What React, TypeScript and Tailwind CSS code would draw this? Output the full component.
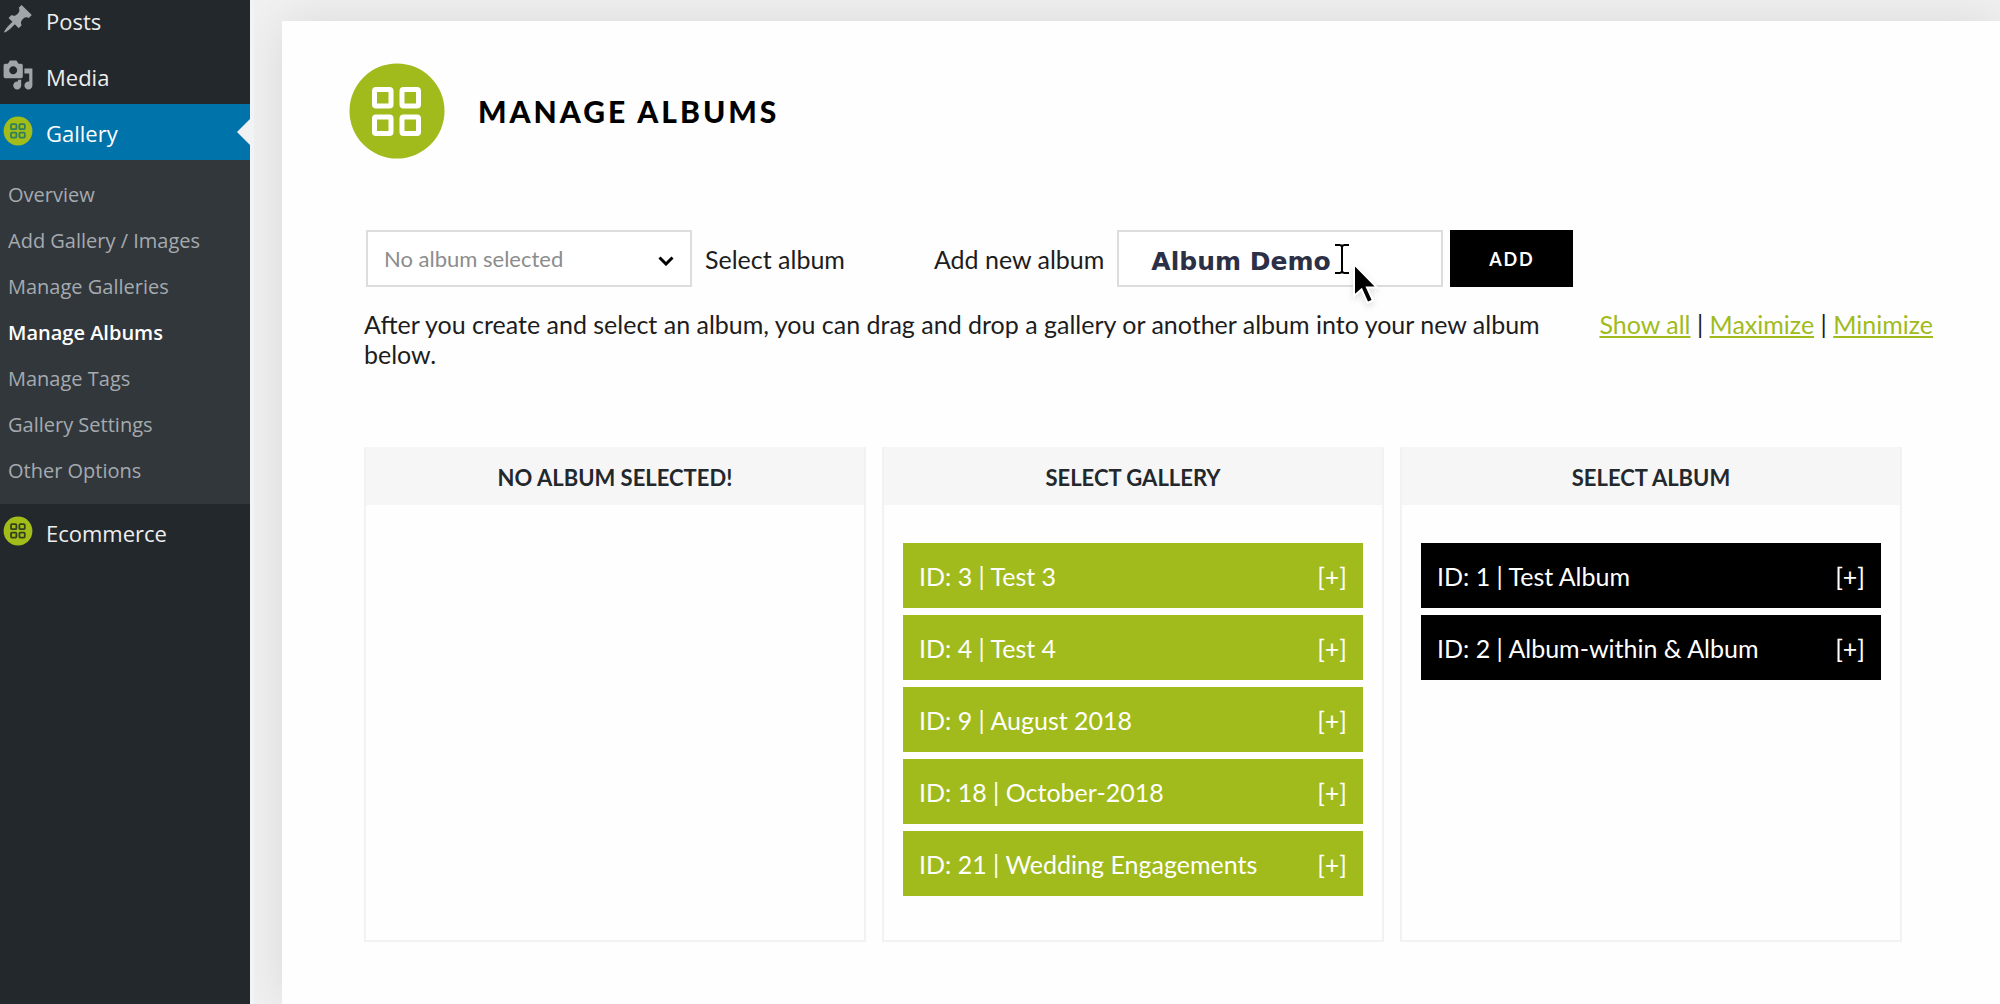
import React from "react";

const submenu = [
  "Overview",
  "Add Gallery / Images",
  "Manage Galleries",
  "Manage Albums",
  "Manage Tags",
  "Gallery Settings",
  "Other Options",
];

const galleries = [
  "ID: 3 | Test 3",
  "ID: 4 | Test 4",
  "ID: 9 | August 2018",
  "ID: 18 | October-2018",
  "ID: 21 | Wedding Engagements",
];

const albums = ["ID: 1 | Test Album", "ID: 2 | Album-within & Album"];

function PinIcon() {
  return (
    <svg viewBox="0 0 20 20" className="mb-1 size-8 shrink-0 fill-[#a0a5aa]" aria-hidden="true">
      <path d="M10.44 3.02l1.82-1.82 6.36 6.35-1.83 1.82c-1.05-.68-2.48-.57-3.41.36l-.75.75c-.92.93-1.04 2.35-.35 3.41l-1.83 1.82-2.41-2.41-2.8 2.79c-.42.42-3.38 2.71-3.8 2.29s1.86-3.39 2.28-3.81l2.79-2.79L4.1 9.36l1.83-1.82c1.05.69 2.48.57 3.4-.36l.75-.75c.93-.92 1.05-2.35.36-3.41z" />
    </svg>
  );
}

function MediaIcon() {
  return (
    <svg viewBox="0 0 20 20" className="mb-1 size-8 shrink-0 fill-[#a0a5aa]" aria-hidden="true">
      <path d="M13 11V4c0-.55-.45-1-1-1h-1.67L9 1H5L3.67 3H2c-.55 0-1 .45-1 1v7c0 .55.45 1 1 1h10c.55 0 1-.45 1-1zM7 4.5c1.38 0 2.5 1.12 2.5 2.5S8.38 9.5 7 9.5 4.5 8.38 4.5 7 5.62 4.5 7 4.5zM14 6h5v10.5c0 1.38-1.12 2.5-2.5 2.5S14 17.88 14 16.5s1.12-2.5 2.5-2.5c.17 0 .34.02.5.05V9h-3V6zm-4 8.05V13h2v3.5c0 1.38-1.12 2.5-2.5 2.5S7 17.88 7 16.5 8.12 14 9.5 14c.17 0 .34.02.5.05z" />
    </svg>
  );
}

function BadgeIcon({ stroke }: { stroke: string }) {
  return (
    <svg viewBox="0 0 32 32" className="mb-1 size-8 shrink-0" fill="none" stroke={stroke} strokeWidth="1.8" aria-hidden="true">
      <circle cx="16" cy="16" r="14.4" fill="#a2bd1a" stroke="none" />
      <rect x="9" y="9.2" width="5.4" height="5" rx="1" />
      <rect x="17.4" y="9.2" width="5.4" height="5" rx="1" />
      <rect x="9" y="17.6" width="5.4" height="5" rx="1" />
      <rect x="17.4" y="17.6" width="5.4" height="5" rx="1" />
    </svg>
  );
}

function Logo() {
  return (
    <svg viewBox="0 0 96 96" className="size-24" fill="none" stroke="#fff" strokeWidth="5" aria-hidden="true">
      <circle cx="48" cy="48" r="47.5" fill="#a0bb1b" stroke="none" />
      <rect x="25.5" y="26.5" width="16.5" height="16.5" rx="1.5" />
      <rect x="53" y="26.5" width="16.5" height="16.5" rx="1.5" />
      <rect x="25.5" y="54" width="16.5" height="16.5" rx="1.5" />
      <rect x="53" y="54" width="16.5" height="16.5" rx="1.5" />
    </svg>
  );
}

function MenuLink({ icon, label, active = false }: { icon: React.ReactNode; label: string; active?: boolean }) {
  return (
    <a
      href="#"
      className={
        active
          ? "relative flex h-14 items-center gap-3 bg-[#0073aa] pl-0.5 pt-0.5 text-white"
          : "flex h-14 items-center gap-3 pl-0.5 pt-0.5 text-[#eeeeee]"
      }
    >
      {icon}
      {label}
      {active && (
        <svg viewBox="0 0 13 26" className="absolute right-0 top-1/2 h-[26px] w-[13px] -translate-y-1/2 fill-[#f1f1f1]" aria-hidden="true">
          <path d="M13 0V26L0 13z" />
        </svg>
      )}
    </a>
  );
}

function Sidebar() {
  return (
    <nav className="w-[250px] shrink-0 bg-[#23282d] font-['Open_Sans','Noto_Sans',sans-serif] text-[22px]">
      <div className="-mt-2">
        <MenuLink icon={<PinIcon />} label="Posts" />
        <MenuLink icon={<MediaIcon />} label="Media" />
        <MenuLink icon={<BadgeIcon stroke="#2f7f5c" />} label="Gallery" active />
        <ul className="bg-[#32373c] pb-2.5 pt-3 text-xl text-[#a5aaaf]">
          {submenu.map((item) => (
            <li key={item}>
              <a
                href="#"
                className={
                  item === "Manage Albums"
                    ? "flex h-[46px] items-center pl-2 font-semibold text-white"
                    : "flex h-[46px] items-center pl-2"
                }
              >
                {item}
              </a>
            </li>
          ))}
        </ul>
        <MenuLink icon={<BadgeIcon stroke="#33421a" />} label="Ecommerce" />
      </div>
    </nav>
  );
}

function Column({ title, items = [], dark = false }: { title: string; items?: string[]; dark?: boolean }) {
  return (
    <section className="border-2 border-t-0 border-[#f2f2f2]">
      <h2 className="flex h-[58px] items-center justify-center bg-[#f6f6f6] pt-1 text-[22px] font-bold text-[#23282d]">
        {title}
      </h2>
      <ul className="flex flex-col gap-[7px] px-[19px] pb-11 pt-[38px]">
        {items.map((item) => (
          <li
            key={item}
            className={
              dark
                ? "flex h-[65px] items-center justify-between bg-black px-4 text-white"
                : "flex h-[65px] items-center justify-between bg-[#a0bb1b] px-4 text-white"
            }
          >
            <span>{item}</span>
            <button type="button" aria-label={`Expand ${item}`}>
              [+]
            </button>
          </li>
        ))}
      </ul>
    </section>
  );
}

function Pointer() {
  return (
    <>
      <svg viewBox="0 0 14 32" className="pointer-events-none absolute left-[218px] top-[13px] h-8 w-3.5" fill="none" stroke="#000" strokeWidth="2" aria-hidden="true">
        <path d="M0 2H5.5M8.5 2H14M5 2.5H9M7 2V30M0 30H5.5M8.5 30H14M5 29.5H9" />
      </svg>
      <svg viewBox="0 0 30 46" className="pointer-events-none absolute left-[234px] top-[31px] h-[46px] w-[30px] drop-shadow-md" aria-hidden="true">
        <path d="M3 3V35L10.5 28.5L16.5 42L22 39.5L16 26.5H26Z" fill="#000" stroke="#fff" strokeWidth="2" />
      </svg>
    </>
  );
}

function Controls() {
  return (
    <form className="flex items-center pl-0.5" onSubmit={(e) => e.preventDefault()}>
      <div className="relative">
        <select
          id="album-select"
          className="h-[57px] w-[326px] appearance-none border-2 border-[#dddddd] bg-white pl-4 text-[22px] text-[#8c8c8c]"
        >
          <option>No album selected</option>
        </select>
        <svg viewBox="0 0 16 10" className="pointer-events-none absolute right-[18px] top-[26px] h-2.5 w-4" fill="none" stroke="#000" strokeWidth="3" aria-hidden="true">
          <path d="M1.5 1.5L8 8L14.5 1.5" />
        </svg>
      </div>
      <label htmlFor="album-select" className="ml-[13px]">
        Select album
      </label>
      <label htmlFor="album-name" className="ml-[89px]">
        Add new album
      </label>
      <div className="relative ml-[13px]">
        <input
          id="album-name"
          type="text"
          defaultValue="Album Demo"
          className="h-[57px] w-[326px] border-2 border-[#dddddd] bg-white pl-8 pt-1.5 font-['DejaVu_Sans',sans-serif] font-bold text-[#2c3046]"
        />
        <Pointer />
      </div>
      <button type="submit" className="ml-[7px] h-[57px] w-[123px] bg-black text-lg font-bold tracking-widest text-white">
        ADD
      </button>
    </form>
  );
}

export default function App() {
  return (
    <div className="flex min-h-screen bg-[#f1f1f1] font-[Lato,sans-serif] text-[25px] leading-[30px] text-[#1d1d1d]">
      <Sidebar />
      <div className="flex min-w-0 grow overflow-hidden border-l-4 border-[#f0f4f7] pl-7 pt-[21px]">
        <main className="grow bg-[#fefefe] px-[67px] pt-[42px] shadow-[0_0_48px_rgba(0,0,0,0.1)]">
          <header className="flex items-center gap-[33px]">
            <Logo />
            <h1 className="text-3xl font-black tracking-widest text-black">MANAGE ALBUMS</h1>
          </header>
          <div className="pl-[15px] pt-[71px]">
            <Controls />
            <div className="mt-[22px] flex justify-between gap-8">
              <p className="flex-1">
                After you create and select an album, you can drag and drop a gallery or another album into your new
                album below.
              </p>
              <p className="whitespace-nowrap">
                <a href="#" className="text-[#a0bb1b] underline">Show all</a> |{" "}
                <a href="#" className="text-[#a0bb1b] underline">Maximize</a> |{" "}
                <a href="#" className="text-[#a0bb1b] underline">Minimize</a>
              </p>
            </div>
            <div className="mb-[62px] mr-[31px] mt-[78px] grid grid-cols-3 gap-4">
              <Column title="NO ALBUM SELECTED!" />
              <Column title="SELECT GALLERY" items={galleries} />
              <Column title="SELECT ALBUM" items={albums} dark />
            </div>
          </div>
        </main>
      </div>
    </div>
  );
}
